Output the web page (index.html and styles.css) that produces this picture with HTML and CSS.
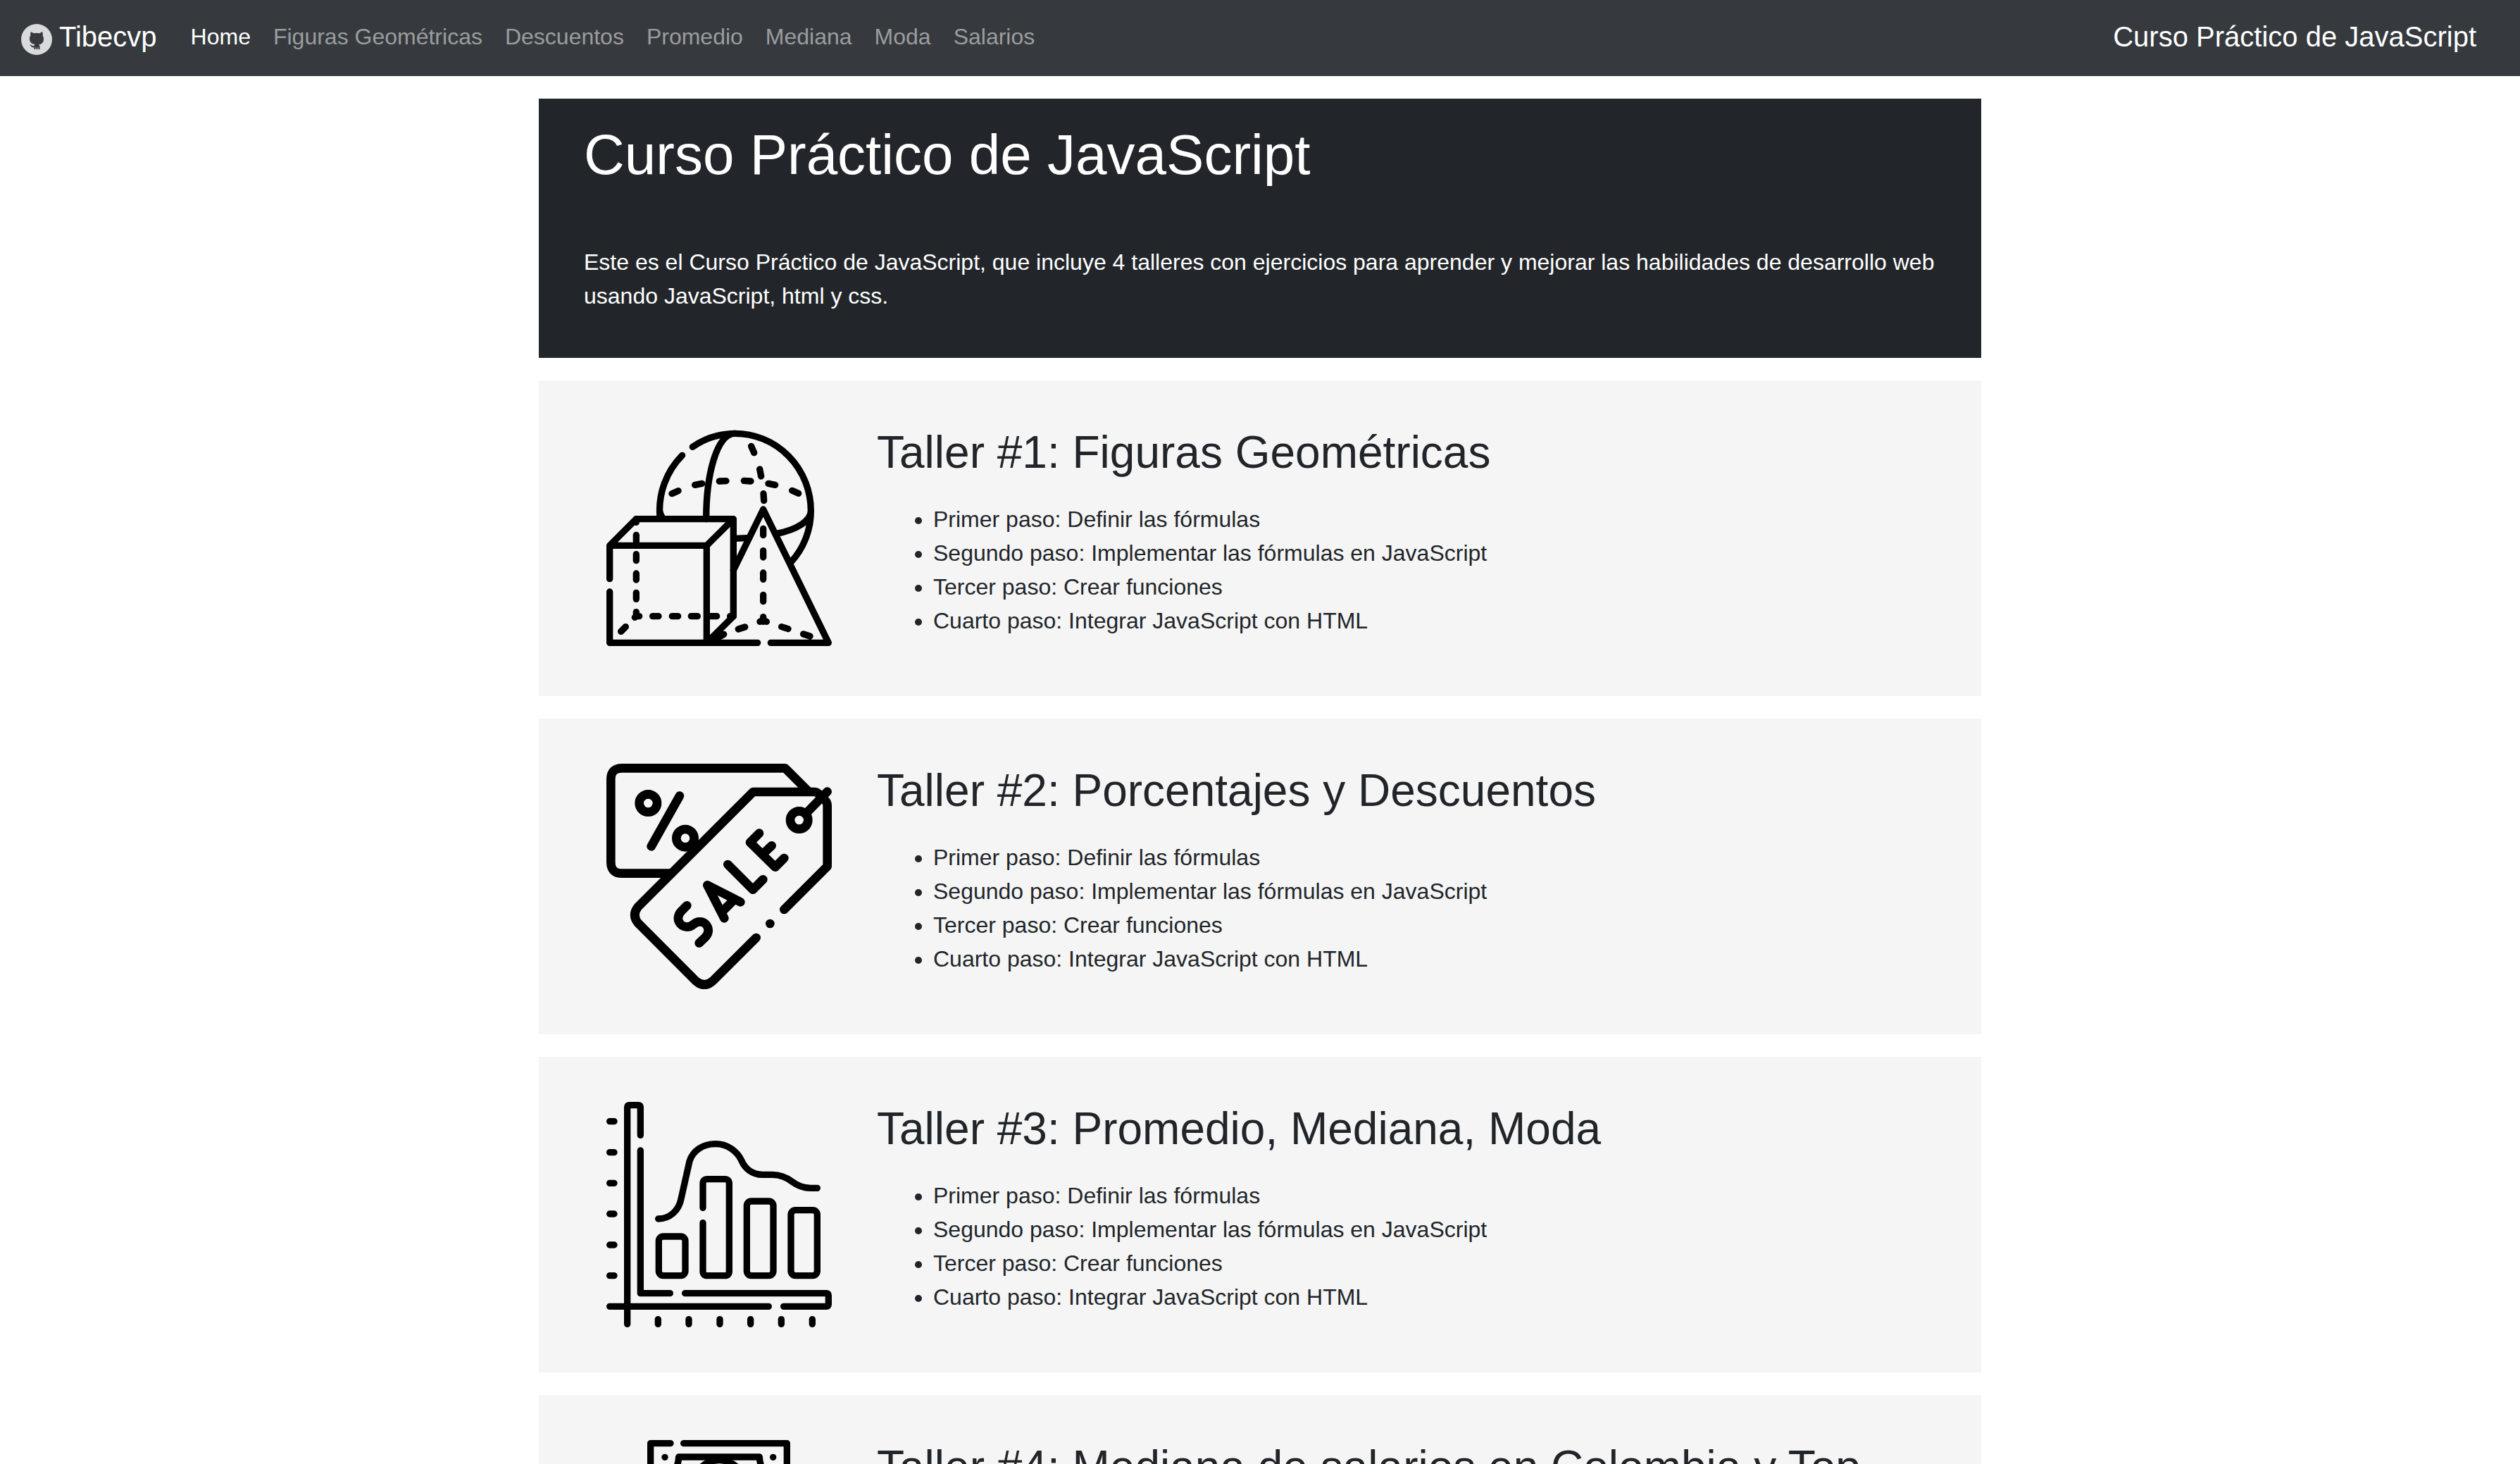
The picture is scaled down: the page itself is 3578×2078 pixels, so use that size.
FILE: index.html
```html
<!DOCTYPE html>
<html lang="es">
<head>
<meta charset="utf-8">
<title>Curso Práctico de JavaScript</title>
<link rel="stylesheet" href="styles.css">
</head>
<body>
<nav class="navbar">
  <a class="brand" href="#">
    <svg class="brand-logo" viewBox="0 0 44 44" aria-hidden="true">
      <circle cx="22" cy="22" r="22" fill="#d9dadb"/>
      <path fill="#363a3e" d="M14 11l4 2.200q4-1 8 0L30 11q1.500 3 .6 5.500 1.900 2.500 1.400 6-.6 6-7 7 1.500 1 1.500 3V36h-2v-2.500h-1V36h-2v-2.500h-1V36h-2v-2.800c-4 .8-4-2-6.500-3.600 3-.6 3.500 2.400 6.500 1.600q0-1.500 1-2.200-7-1-7.500-7-.4-3.500 1.400-6Q12.500 14 14 11z"/>
    </svg>
    <span>Tibecvp</span>
  </a>
  <ul class="nav-links">
    <li><a class="nav-link active" href="#">Home</a></li>
    <li><a class="nav-link" href="#">Figuras Geométricas</a></li>
    <li><a class="nav-link" href="#">Descuentos</a></li>
    <li><a class="nav-link" href="#">Promedio</a></li>
    <li><a class="nav-link" href="#">Mediana</a></li>
    <li><a class="nav-link" href="#">Moda</a></li>
    <li><a class="nav-link" href="#">Salarios</a></li>
  </ul>
  <span class="nav-title">Curso Práctico de JavaScript</span>
</nav>
<main class="content">
  <header class="intro">
    <h1>Curso Práctico de JavaScript</h1>
    <p>Este es el Curso Práctico de JavaScript, que incluye 4 talleres con ejercicios para aprender y mejorar las habilidades de desarrollo web usando JavaScript, html y css.</p>
  </header>

  <section class="card">
    <svg class="card-icon" viewBox="0 0 960 960" aria-hidden="true">
      <g class="line w28" transform="translate(-60 -42)">
        <path d="M427 133A325 325 0 0 1 608 76A323 329 0 0 1 931 405A322 322 0 0 1 845 625M383 169A332 332 0 0 0 288 432M485 440C485 250 530 76 608 76M287 405Q289 420 300 436M605 523L660 521M785 502C870 486 931 448 931 405"/>
        <path d="M339 332l27-12M437 295l30-6M541 279l29-1M646 277l29 2M750 289l29 6M851 319l27 12M677 130l12 28M713 228l6 30M729 332l2 30"/>
        <path d="M74 695V553L187 440H601V854L487 967V553H74M74 750V967H704M487 553L601 440"/>
        <path d="M187 440V454M187 508V535M187 590V617M187 672V699M187 754V781M187 836V854M181 859L187 854H200M257 854h25M340 854h25M421 854h27M503 854h27M587 854h14M142 899L122 919"/>
        <path d="M760 967H1006L728 399L601 658M728 481v28M728 575v28M728 669v28M728 763v28M728 857v20M714 877L728 870L742 877M622 909l28-9M806 899l28 9M899 930l28 9M502 964L560 931"/>
      </g>
    </svg>
    <div class="card-body">
      <h2>Taller #1: Figuras Geométricas</h2>
      <ul>
        <li>Primer paso: Definir las fórmulas</li>
        <li>Segundo paso: Implementar las fórmulas en JavaScript</li>
        <li>Tercer paso: Crear funciones</li>
        <li>Cuarto paso: Integrar JavaScript con HTML</li>
      </ul>
    </div>
  </section>

  <section class="card">
    <svg class="card-icon" viewBox="0 0 960 960" aria-hidden="true">
      <g class="line w38" transform="translate(-60 -72)">
        <path d="M920 190L821 91H127Q79 91 79 139V491Q79 539 127 539H335"/>
        <circle cx="238" cy="240" r="38"/><circle cx="396" cy="389" r="38"/><circle cx="881" cy="312" r="38"/>
        <path d="M372 209L251 424"/>
        <path d="M698 813L512 998Q477 1028 442 998L195 751Q167 716 195 681L685 192H945Q955 192 962 199L990 226Q1001 236 1001 250V509L817 693M908 286L1001 191M757 753h.1"/>
        <path d="M403 676L380 699C350 729 372 767 403 767C433 767 430 745 457 745C493 745 505 785 482 810L455 836M562 730L490 589L631 661M557 698L600 655M577 501L684 608L727 565M711 368L672 407L779 512L817 474M730 453L764 421"/>
      </g>
    </svg>
    <div class="card-body">
      <h2>Taller #2: Porcentajes y Descuentos</h2>
      <ul>
        <li>Primer paso: Definir las fórmulas</li>
        <li>Segundo paso: Implementar las fórmulas en JavaScript</li>
        <li>Tercer paso: Crear funciones</li>
        <li>Cuarto paso: Integrar JavaScript con HTML</li>
      </ul>
    </div>
  </section>

  <section class="card">
    <svg class="card-icon" viewBox="0 0 960 960" aria-hidden="true">
      <g class="line w28" transform="translate(-60 -72)">
        <path d="M205 214V94Q205 86 197 86H157Q149 86 149 94V1018M205 279V887H331M395 887H997Q1006 887 1006 896V934Q1006 943 997 943H815M751 943H74"/>
        <path d="M74 155h19M74 287h19M74 418h19M74 549h19M74 681h19M74 812h19M280 998v20M411 998v20M543 998v20M674 998v20M805 998v20M937 998v20"/>
        <path d="M281 570C330 570 367 535 377 490L414 325C428 280 470 251 525 251C575 251 616 281 635 321C650 355 680 382 725 382H767C800 382 825 392 850 411C875 430 905 439 930 439H958"/>
        <rect x="283" y="645" width="113" height="167" rx="19"/>
        <rect x="658" y="495" width="113" height="317" rx="19"/>
        <rect x="846" y="533" width="112" height="279" rx="19"/>
        <path d="M471 523V420Q471 401 490 401H564Q583 401 583 420V793Q583 812 564 812H490Q471 812 471 793V587"/>
      </g>
    </svg>
    <div class="card-body">
      <h2>Taller #3: Promedio, Mediana, Moda</h2>
      <ul>
        <li>Primer paso: Definir las fórmulas</li>
        <li>Segundo paso: Implementar las fórmulas en JavaScript</li>
        <li>Tercer paso: Crear funciones</li>
        <li>Cuarto paso: Integrar JavaScript con HTML</li>
      </ul>
    </div>
  </section>

  <section class="card">
    <svg class="card-icon" viewBox="0 0 960 960" aria-hidden="true">
      <g class="line w28">
        <path d="M273 14H188V946H769V14H329"/>
        <path d="M288 132Q307 108 308 72H652Q653 108 672 132V800H288Z"/>
        <circle cx="480" cy="199" r="113"/>
        <path d="M249 73h.1M710 73h.1"/>
      </g>
    </svg>
    <div class="card-body">
      <h2>Taller #4: Mediana de salarios en Colombia y Top</h2>
    </div>
  </section>
</main>
</body>
</html>
```

FILE: styles.css
```css
* {
  box-sizing: border-box;
}

html,
body {
  margin: 0;
}

body {
  height: 100vh;
  overflow: hidden;
  background: #fff;
  color: #212529;
  font: 32px/48px "Liberation Sans", Arial, sans-serif;
}

h1,
h2,
p,
ul {
  margin: 0;
}

a {
  color: inherit;
  text-decoration: none;
}

.navbar {
  display: flex;
  align-items: center;
  height: 108px;
  padding: 0 62px 4px 30px;
  background: #363a3e;
  color: #fff;
}

.brand {
  display: flex;
  align-items: center;
  gap: 10px;
  margin-right: 32px;
  font-size: 40px;
}

.brand-logo {
  width: 44px;
  height: 44px;
  margin-top: 8px;
}

.nav-links {
  display: flex;
  padding: 0;
  list-style: none;
}

.nav-link {
  padding: 16px;
  color: #9a9d9f;
}

.nav-link.active {
  color: #fff;
}

.nav-title {
  margin-left: auto;
  font-size: 40px;
}

.content {
  display: grid;
  gap: 32px;
  max-width: 2048px;
  margin: 32px auto;
}

.intro {
  padding: 32px 64px 64px;
  background: #22262a;
  color: #fff;
}

.intro h1 {
  margin-bottom: 80px;
  font-size: 80px;
  line-height: 96px;
  font-weight: 400;
}

.card {
  display: flex;
  gap: 64px;
  padding: 64px 96px;
  background: #f5f5f5;
}

.card-icon {
  flex: none;
  width: 320px;
  height: 320px;
}

.card h2 {
  margin-bottom: 32px;
  font-size: 64px;
  line-height: 77px;
  font-weight: 400;
}

.card ul {
  padding-left: 80px;
}

.line {
  fill: none;
  stroke: #000;
  stroke-linecap: round;
  stroke-linejoin: round;
}

.w28 {
  stroke-width: 28px;
}

.w38 {
  stroke-width: 38px;
}
```
